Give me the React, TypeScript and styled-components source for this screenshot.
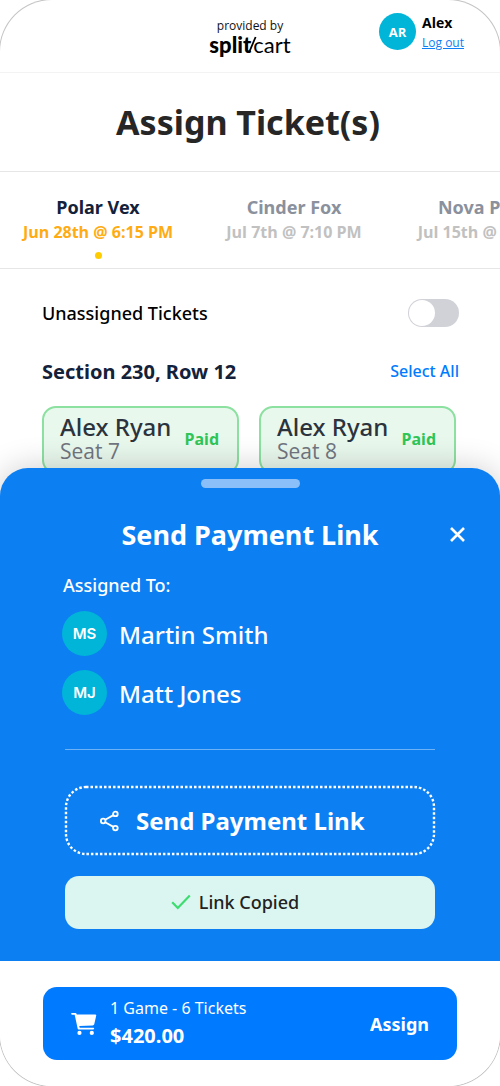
import React from "react";
import styled, { createGlobalStyle } from "styled-components";

const GlobalStyle = createGlobalStyle`
  * { box-sizing: border-box; }
  html, body { margin: 0; background: #fff; overflow-x: hidden; }
  body, button, input { font-family: "Noto Sans", "Open Sans", sans-serif; }
  button { border: 0; padding: 0; background: none; color: inherit; cursor: pointer; }
  h1, h2, h3, p, ul { margin: 0; padding: 0; }
  ul { list-style: none; }
`;

const Screen = styled.div`
  display: flex;
  flex-direction: column;
  min-height: 100vh;
  overflow: hidden;
  border-radius: 52px;
  box-shadow: 0 0 0 1px #c4c4c4;
  background: #fff;
`;

const Header = styled.header`
  display: grid;
  grid-template-columns: 1fr auto 1fr;
  height: 73px;
  padding: 0 36px;
  border-bottom: 1px solid #f3f3f3;
`;

const Brand = styled.div`
  grid-column: 2;
  padding-top: 18px;
  text-align: center;
  font-family: "Open Sans", sans-serif;
  font-size: 12px;
  line-height: 16px;
  color: #111;
`;

const Logo = styled.div`
  display: flex;
  justify-content: center;
  font-family: Lato, sans-serif;
  font-size: 22px;
  line-height: 22px;
  color: #000;
`;

const LogoBold = styled.span`
  font-weight: 900;
`;

const LogoLight = styled.span`
  font-weight: 400;
`;

const LogoSlash = styled.svg`
  flex: none;
  width: 10px;
  height: 22px;
  margin: 0 -4px;
`;

const Account = styled.div`
  display: flex;
  justify-self: end;
  gap: 6px;
  padding-top: 13px;
  font-family: "Open Sans", sans-serif;
`;

const Avatar = styled.span<{ $large?: boolean }>`
  display: flex;
  flex: none;
  align-items: center;
  justify-content: center;
  width: ${(p) => (p.$large ? 45 : 37)}px;
  height: ${(p) => (p.$large ? 45 : 37)}px;
  border-radius: 50%;
  background: #00b5d8;
  color: #fff;
  font-family: ${(p) => (p.$large ? "Inter" : '"Open Sans"')}, sans-serif;
  font-size: ${(p) => (p.$large ? 15 : 13)}px;
  font-weight: ${(p) => (p.$large ? 600 : 700)};
`;

const AccountName = styled.p`
  font-size: 14px;
  font-weight: 700;
  line-height: 20px;
  color: #000;
`;

const LogOut = styled.a`
  display: block;
  font-size: 12px;
  line-height: 20px;
  color: #0b7ff5;
`;

const Title = styled.h1`
  height: 99px;
  padding-right: 4px;
  border-bottom: 1px solid #e6e6e8;
  text-align: center;
  font-size: 34px;
  font-weight: 700;
  line-height: 98px;
  color: #262626;
`;

const Games = styled.nav`
  display: flex;
  height: 97px;
  padding-top: 23px;
  overflow: hidden;
  border-bottom: 1px solid #e6e6e8;
`;

const Game = styled.button<{ $active?: boolean }>`
  display: flex;
  flex: none;
  flex-direction: column;
  align-items: center;
  justify-content: flex-start;
  width: 196px;
  color: ${(p) => (p.$active ? "#14213a" : "#8a919d")};
  font-size: 18px;
  font-weight: 700;
  line-height: 25px;
  white-space: nowrap;
`;

const GameDate = styled.span<{ $active?: boolean }>`
  color: ${(p) => (p.$active ? "#ffab13" : "#c1c1c1")};
  font-family: "Open Sans", sans-serif;
  font-size: 16px;
`;

const ActiveDot = styled.span`
  width: 7px;
  height: 7px;
  margin-top: 7px;
  border-radius: 50%;
  background: #fc0;
`;

const Tickets = styled.main`
  padding: 29px 41px 0 42px;
`;

const Row = styled.div`
  display: flex;
  align-items: center;
  justify-content: space-between;
  height: 30px;
`;

const SectionRow = styled(Row)`
  margin-top: 28px;
`;

const ToggleLabel = styled.label`
  font-size: 18px;
  font-weight: 500;
  color: #000;
`;

const Toggle = styled.input`
  display: flex;
  appearance: none;
  width: 51px;
  height: 28px;
  margin: 0;
  padding: 1px;
  border-radius: 14px;
  background: #d1d2d8;
  cursor: pointer;
  &::before {
    content: "";
    width: 26px;
    height: 26px;
    border-radius: 50%;
    background: #fff;
  }
  &:checked {
    justify-content: flex-end;
    background: #007aff;
  }
`;

const SectionName = styled.h2`
  font-size: 20px;
  font-weight: 700;
  color: #14213a;
`;

const SelectAll = styled.button`
  color: #007aff;
  font-size: 16px;
  font-weight: 500;
`;

const Seats = styled.ul`
  display: grid;
  grid-template-columns: 1fr 1fr;
  gap: 20px;
  margin: 20px 3px 0 0;
`;

const Seat = styled.li`
  display: flex;
  align-items: center;
  justify-content: space-between;
  height: 68px;
  padding: 0 18px 2px 16px;
  border: 2px solid #8ce0a0;
  border-radius: 14px;
  background: #e9f8ed;
  color: #70757f;
  font-family: "Open Sans", sans-serif;
  font-size: 21px;
  line-height: 25px;
`;

const SeatOwner = styled.h3`
  font-family: "Noto Sans", sans-serif;
  font-size: 24px;
  font-weight: 500;
  line-height: 25px;
  color: #2c333d;
  white-space: nowrap;
`;

const Paid = styled.span`
  color: #2fc557;
  font-family: "Noto Sans", sans-serif;
  font-size: 16px;
  font-weight: 700;
`;

const Sheet = styled.section`
  z-index: 1;
  flex: 1;
  margin-top: -6px;
  padding: 11px 65px 31px;
  border-radius: 28px 28px 0 0;
  background: #0c7ff2;
  box-shadow: 0 0 32px rgba(0, 0, 0, 0.2);
  color: #fff;
`;

const Handle = styled.div`
  width: 99px;
  height: 9px;
  margin: 0 auto;
  border-radius: 5px;
  background: #8abff9;
`;

const SheetHead = styled.div`
  display: grid;
  grid-template-columns: 1fr auto 1fr;
  align-items: center;
  margin: 26px -32px 0;
  height: 40px;
`;

const SheetTitle = styled.h2`
  grid-column: 2;
  font-size: 27px;
  font-weight: 700;
`;

const Close = styled.button`
  display: flex;
  justify-self: end;
  padding: 2px;
`;

const Assigned = styled.h3`
  margin: 19px -2px 0;
  font-size: 18px;
  font-weight: 500;
  line-height: 24px;
`;

const People = styled.ul`
  display: grid;
  gap: 14px;
  margin: 14px -3px 34px;
`;

const Person = styled.li`
  display: flex;
  align-items: center;
  gap: 12px;
  font-size: 24px;
  font-weight: 500;
  line-height: 45px;
`;

const PersonName = styled.span`
  height: 45px;
  line-height: 48px;
`;

const Divider = styled.hr`
  height: 1px;
  margin: 0;
  border: 0;
  background: #6db2f7;
`;

const SendLink = styled.button`
  position: relative;
  display: flex;
  align-items: center;
  gap: 16px;
  width: 100%;
  height: 69px;
  margin-top: 36px;
  padding-left: 35px;
  font-size: 24px;
  font-weight: 700;
`;

const DottedOutline = styled.svg`
  position: absolute;
  inset: 0;
  width: 100%;
  height: 100%;
  overflow: visible;
`;

const OutlineShape = styled.rect`
  x: 1px;
  y: 1px;
  width: calc(100% - 2px);
  height: calc(100% - 2px);
`;

const Copied = styled.p`
  display: flex;
  align-items: center;
  justify-content: center;
  gap: 8px;
  height: 53px;
  margin-top: 21px;
  padding: 0 30px 2px 0;
  border-radius: 14px;
  background: #dbf5f1;
  color: #222;
  font-size: 18px;
  font-weight: 500;
`;

const Footer = styled.footer`
  z-index: 2;
  padding: 26px 43px;
  background: #fff;
`;

const AssignButton = styled.button`
  display: flex;
  align-items: center;
  width: 100%;
  height: 73px;
  padding: 0 28px;
  border-radius: 14px;
  background: #007aff;
  color: #fff;
  text-align: left;
  font-size: 18px;
  font-weight: 700;
`;

const Summary = styled.span`
  display: grid;
  flex: 1;
  margin-left: 13px;
  padding-bottom: 4px;
  font-size: 16px;
  font-weight: 400;
  line-height: 28px;
`;

const Total = styled.strong`
  font-size: 20px;
  font-weight: 700;
`;

const games = [
  { name: "Polar Vex", date: "Jun 28th @ 6:15 PM" },
  { name: "Cinder Fox", date: "Jul 7th @ 7:10 PM" },
  { name: "Nova Prime", date: "Jul 15th @ 7:10 PM" },
];

const people = [
  { initials: "MS", name: "Martin Smith" },
  { initials: "MJ", name: "Matt Jones" },
];

export default function App() {
  return (
    <>
      <GlobalStyle />
      <Screen>
        <Header>
          <Brand>
            provided by
            <Logo>
              <LogoBold>split</LogoBold>
              <LogoSlash viewBox="0 0 10 22">
                <path d="M8.6 3 2 18.6" stroke="#000" strokeWidth="1.8" />
              </LogoSlash>
              <LogoLight>cart</LogoLight>
            </Logo>
          </Brand>
          <Account>
            <Avatar>AR</Avatar>
            <div>
              <AccountName>Alex</AccountName>
              <LogOut href="#logout">Log out</LogOut>
            </div>
          </Account>
        </Header>
        <Title>Assign Ticket(s)</Title>
        <Games>
          {games.map((game, i) => (
            <Game key={game.name} $active={i === 0}>
              {game.name}
              <GameDate $active={i === 0}>{game.date}</GameDate>
              {i === 0 && <ActiveDot />}
            </Game>
          ))}
        </Games>
        <Tickets>
          <Row>
            <ToggleLabel htmlFor="unassigned">Unassigned Tickets</ToggleLabel>
            <Toggle id="unassigned" type="checkbox" role="switch" />
          </Row>
          <SectionRow>
            <SectionName>Section 230, Row 12</SectionName>
            <SelectAll>Select All</SelectAll>
          </SectionRow>
          <Seats>
            {[7, 8].map((seat) => (
              <Seat key={seat}>
                <div>
                  <SeatOwner>Alex Ryan</SeatOwner>
                  <p>Seat {seat}</p>
                </div>
                <Paid>Paid</Paid>
              </Seat>
            ))}
          </Seats>
        </Tickets>
        <Sheet>
          <Handle />
          <SheetHead>
            <SheetTitle>Send Payment Link</SheetTitle>
            <Close aria-label="Close">
              <svg width="15" height="15" viewBox="0 0 15 15">
                <path d="M1 1l13 13M14 1 1 14" stroke="#fff" strokeWidth="2.6" />
              </svg>
            </Close>
          </SheetHead>
          <Assigned>Assigned To:</Assigned>
          <People>
            {people.map((person) => (
              <Person key={person.name}>
                <Avatar $large>{person.initials}</Avatar>
                <PersonName>{person.name}</PersonName>
              </Person>
            ))}
          </People>
          <Divider />
          <SendLink>
            <DottedOutline aria-hidden="true">
              <OutlineShape rx="20" fill="none" stroke="#fff" strokeWidth="2.4" strokeDasharray="2.5 2" />
            </DottedOutline>
            <svg width="20" height="22" viewBox="0 0 20 22" fill="none" stroke="#fff" strokeWidth="1.8">
              <circle cx="3.2" cy="11" r="2.3" />
              <circle cx="15.4" cy="3.9" r="2.3" />
              <circle cx="15.4" cy="18.1" r="2.3" />
              <path d="M5.2 9.8 13.4 5.1M5.2 12.2l8.2 4.7" />
            </svg>
            Send Payment Link
          </SendLink>
          <Copied role="status">
            <svg width="20" height="16" viewBox="0 0 20 16" fill="none" stroke="#3ddc70" strokeWidth="2.2">
              <path d="M1.2 8.2 6.8 14 18.8 1.6" />
            </svg>
            Link Copied
          </Copied>
        </Sheet>
        <Footer>
          <AssignButton>
            <svg width="26" height="24" viewBox="0 0 27 24" fill="#fff">
              <path d="M1 .5h3.6c.7 0 1 .4 1.2 1l.2.6h19.2c.8 0 1.2.5 1 1.2l-2 8.7c-.2.9-.8 1.4-1.7 1.5L8.6 14.2l.4 1.7h14.2c1.2 0 1.2 1.8 0 1.8H8.3c-.8 0-1.2-.4-1.4-1.1L3.8 2.3H1C-.2 2.3-.2.5 1 .5Z" />
              <circle cx="8.8" cy="21.3" r="2.2" />
              <circle cx="21.6" cy="21.3" r="2.2" />
            </svg>
            <Summary>
              1 Game - 6 Tickets
              <Total>$420.00</Total>
            </Summary>
            Assign
          </AssignButton>
        </Footer>
      </Screen>
    </>
  );
}
